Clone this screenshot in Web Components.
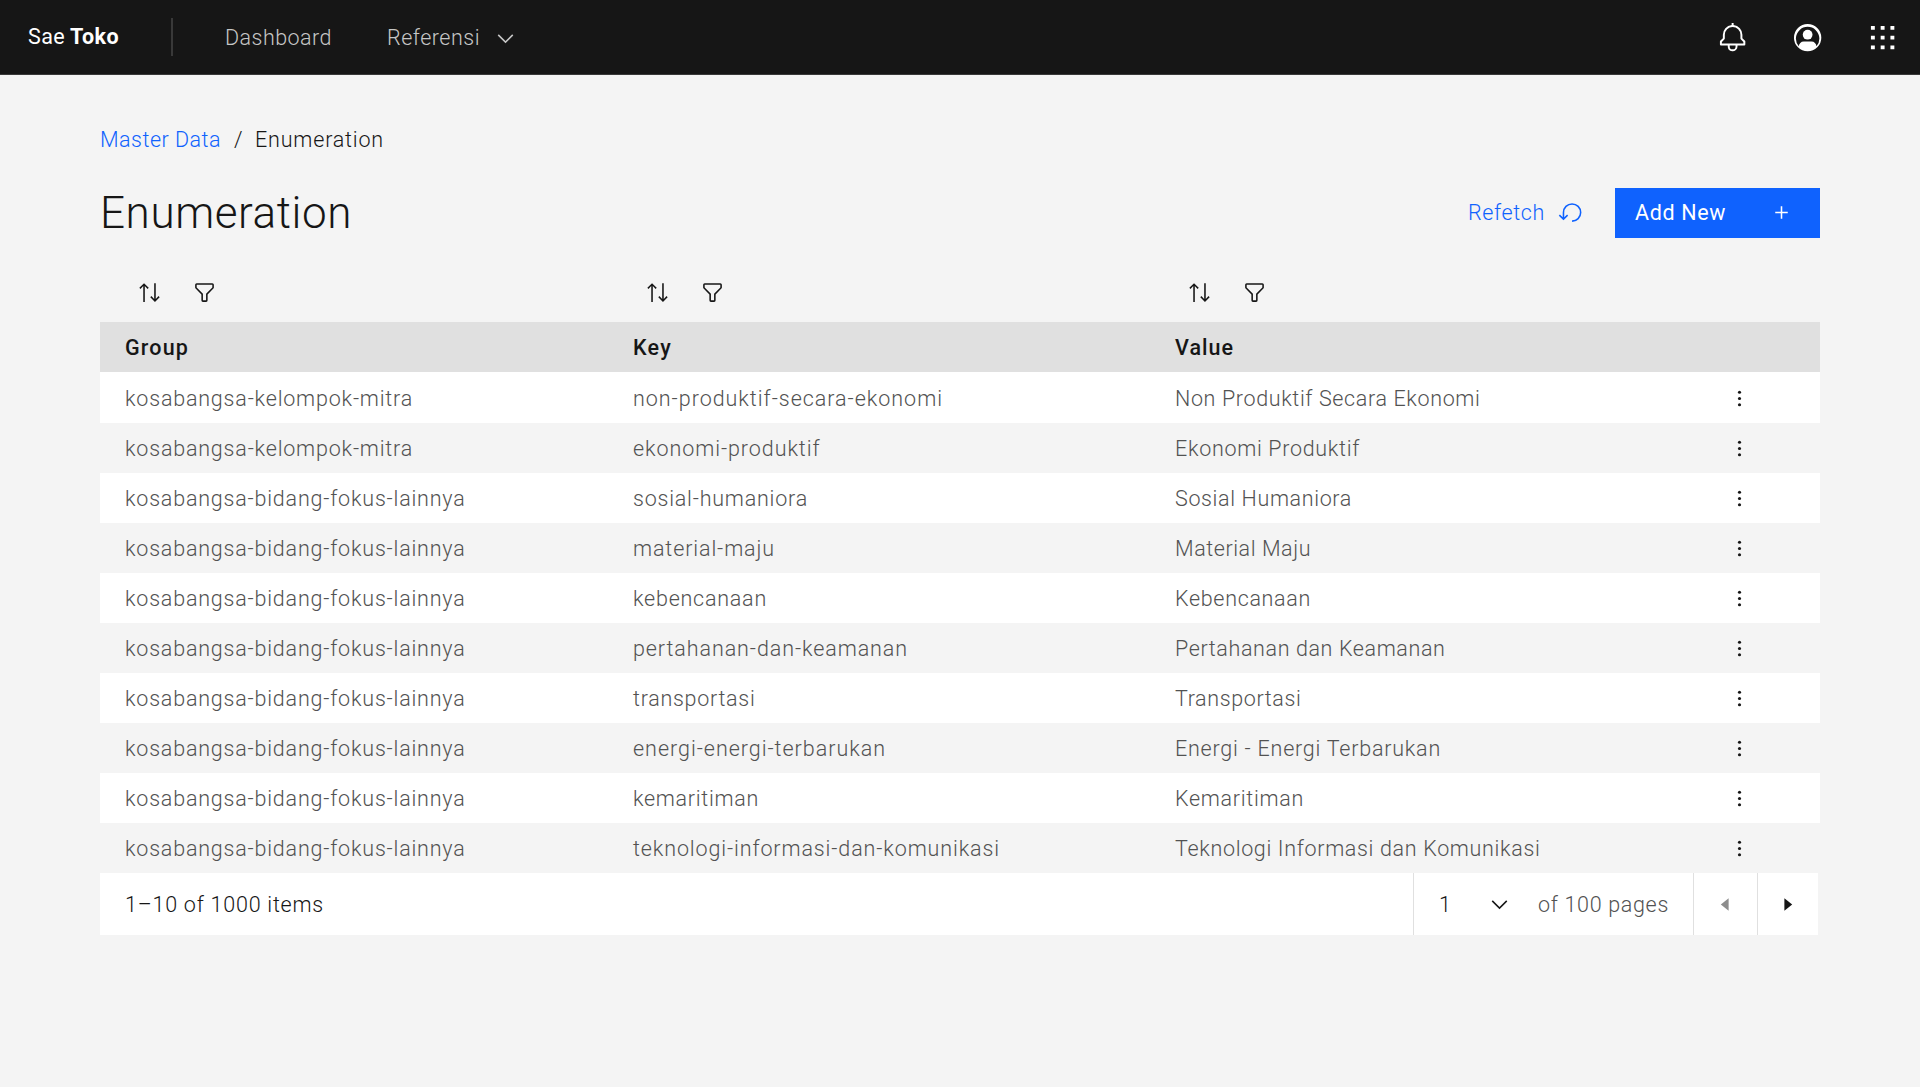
<!DOCTYPE html>
<html lang="id">
<head>
<meta charset="utf-8">
<title>Sae Toko</title>
<style>
html,body{margin:0;height:100%}
body{background:#f4f4f4;font-family:Roboto,"Open Sans",sans-serif;font-size:21.5px;font-weight:350;color:#161616;line-height:50px}
</style>
</head>
<body>
<sae-app></sae-app>
<script>
const ICONS={
bell:'<path d="M28.7071,19.293,26,16.5859V13a10.0136,10.0136,0,0,0-9-9.9492V1H15V3.0508A10.0136,10.0136,0,0,0,6,13v3.5859L3.2929,19.293A1,1,0,0,0,3,20v3a1,1,0,0,0,1,1h7v.7768a5.152,5.152,0,0,0,4.5,5.1987A5.0057,5.0057,0,0,0,21,25V24h7a1,1,0,0,0,1-1V20A1,1,0,0,0,28.7071,19.293ZM19,25a3,3,0,0,1-6,0V24h6Zm8-3H5V20.4141L7.707,17.707A1,1,0,0,0,8,17V13a8,8,0,0,1,16,0v4a1,1,0,0,0,.293.707L27,20.4141Z"/>',
user:'<path d="M16,8a5,5,0,1,0,5,5A5,5,0,0,0,16,8Z"/><path d="M16,2A14,14,0,1,0,30,16,14.0158,14.0158,0,0,0,16,2ZM24.993,24.9258A5.0016,5.0016,0,0,0,20,20H12a5.0016,5.0016,0,0,0-4.9929,4.9258,12,12,0,1,1,17.9858,0Z"/>',
grid:'<path d="M14 4h4v4h-4zM4 4h4v4H4zM24 4h4v4h-4zM14 14h4v4h-4zM4 14h4v4H4zM24 14h4v4h-4zM14 24h4v4h-4zM4 24h4v4H4zM24 24h4v4h-4z"/>',
sort:'<path d="M27.6 20.6L24 24.2 24 4 22 4 22 24.2 18.4 20.6 17 22 23 28 29 22zM9 4L3 10 4.4 11.4 8 7.8 8 28 10 28 10 7.8 13.6 11.4 15 10z"/>',
filter:'<path d="M18,28H14a2,2,0,0,1-2-2V18.41L4.59,11A2,2,0,0,1,4,9.59V6A2,2,0,0,1,6,4H26a2,2,0,0,1,2,2V9.59A2,2,0,0,1,27.41,11L20,18.41V26A2,2,0,0,1,18,28ZM6,6V9.59l8,8V26h4V17.59l8-8V6Z"/>',
reset:'<path d="M18,28A12,12,0,1,0,6,16v6.2L2.4,18.6,1,20l6,6,6-6-1.4-1.4L8,22.2V16H8A10,10,0,1,1,18,26Z"/>',
plus:'<path d="M17 15V8h-2v7H8v2h7v7h2v-7h7v-2z"/>',
chevron:'<path d="M16 22L6 12 7.4 10.6 16 19.2 24.6 10.6 26 12z"/>',
left:'<path d="M20 24L10 16 20 8z"/>',
right:'<path d="M12 8L22 16 12 24z"/>',
dots:'<circle cx="16" cy="8" r="2"/><circle cx="16" cy="16" r="2"/><circle cx="16" cy="24" r="2"/>'
};
class SaeIcon extends HTMLElement{
  connectedCallback(){
    const s=this.getAttribute('size')||25;
    this.attachShadow({mode:'open'}).innerHTML=`<style>:host{display:block;flex:none;width:${s}px;height:${s}px}svg{display:block;width:100%;height:100%;fill:currentColor}</style><svg viewBox="0 0 32 32">${ICONS[this.getAttribute('name')]}</svg>`;
  }
}
customElements.define('sae-icon',SaeIcon);

/* A label that tracks its letters so that the run fills the width in `w`. */
class SaeLabel extends HTMLElement{
  connectedCallback(){
    this.attachShadow({mode:'open'}).innerHTML='<style>:host{display:block;flex:none;white-space:nowrap}span{display:inline-block}</style><span><slot></slot></span>';
    const w=+this.getAttribute('w'),span=this.shadowRoot.querySelector('span');
    this.style.width=w+'px';
    const n=this.textContent.length;
    span.style.letterSpacing=((w-span.getBoundingClientRect().width)/n).toFixed(3)+'px';
  }
}
customElements.define('sae-label',SaeLabel);

class SaeHeader extends HTMLElement{
  connectedCallback(){
    this.attachShadow({mode:'open'}).innerHTML=`<style>
:host{display:flex;align-items:center;box-sizing:border-box;height:75px;background:#161616;border-bottom:1px solid #393939;color:#c6c6c6;font-weight:400;padding:1px 22px 0 28px}
.brand{display:flex;gap:5px;color:#fff;padding-bottom:1px}
.brand b{font-weight:700}
.rule{width:2px;height:38px;background:#393939;margin:0 52px 1px 52px}
nav{display:flex;align-items:center;gap:55px;font-weight:350;padding-top:1px}
.menu{display:flex;align-items:center;gap:13px}
.actions{display:flex;gap:43.5px;margin-left:auto;color:#fff}
</style>
<div class="brand"><sae-label w="37">Sae</sae-label><b><sae-label w="49">Toko</sae-label></b></div>
<div class="rule"></div>
<nav><sae-label w="107">Dashboard</sae-label><div class="menu"><sae-label w="93">Referensi</sae-label><sae-icon name="chevron"></sae-icon></div></nav>
<div class="actions"><sae-icon name="bell" size="31.25"></sae-icon><sae-icon name="user" size="31.25"></sae-icon><sae-icon name="grid" size="31.25"></sae-icon></div>`;
  }
}
customElements.define('sae-header',SaeHeader);

class SaePageHead extends HTMLElement{
  connectedCallback(){
    this.attachShadow({mode:'open'}).innerHTML=`<style>
:host{display:block}
.crumbs{display:flex;height:50px}
.crumbs a,.refetch{color:#0f62fe}
.bar{display:flex;align-items:center;justify-content:space-between;height:50px;margin-top:23px}
h1{margin:0;font-size:44px}
h1{font-weight:330}
.actions{display:flex;gap:32px}
.refetch{display:flex;align-items:center;gap:13px}
.refetch sae-icon,.add sae-icon{margin-bottom:1px}
.add{display:flex;align-items:center;justify-content:space-between;box-sizing:border-box;width:205px;height:50px;padding:0 26px 0 20px;background:#0f62fe;color:#fff;font-weight:400}
</style>
<div class="crumbs"><a><sae-label w="121">Master Data</sae-label></a><sae-label w="9" style="margin:0 12px 0 13px">/</sae-label><sae-label w="129">Enumeration</sae-label></div>
<div class="bar"><h1><sae-label w="252">Enumeration</sae-label></h1>
<div class="actions"><div class="refetch"><sae-label w="77">Refetch</sae-label><sae-icon name="reset"></sae-icon></div>
<div class="add"><sae-label w="91">Add New</sae-label><sae-icon name="plus"></sae-icon></div></div></div>`;
  }
}
customElements.define('sae-page-head',SaePageHead);

const B=['kosabangsa-bidang-fokus-lainnya',340.5],M=['kosabangsa-kelompok-mitra',288];
const ROWS=[
[M,['non-produktif-secara-ekonomi',310],['Non Produktif Secara Ekonomi',305.5]],
[M,['ekonomi-produktif',187.5],['Ekonomi Produktif',185]],
[B,['sosial-humaniora',175],['Sosial Humaniora',177]],
[B,['material-maju',142],['Material Maju',136]],
[B,['kebencanaan',134],['Kebencanaan',136]],
[B,['pertahanan-dan-keamanan',275],['Pertahanan dan Keamanan',270.5]],
[B,['transportasi',122.5],['Transportasi',126.5]],
[B,['energi-energi-terbarukan',253],['Energi - Energi Terbarukan',266]],
[B,['kemaritiman',126],['Kemaritiman',129]],
[B,['teknologi-informasi-dan-komunikasi',367],['Teknologi Informasi dan Komunikasi',365.5]]];

class SaeTable extends HTMLElement{
  connectedCallback(){
    const label=([t,w])=>`<div><sae-label w="${w}">${t}</sae-label></div>`;
    const tools='<div class="tools"><sae-icon name="sort"></sae-icon><sae-icon name="filter"></sae-icon></div>';
    this.attachShadow({mode:'open'}).innerHTML=`<style>
:host{display:block}
.row{display:grid;grid-template-columns:508px 542px 1fr auto;align-items:center;box-sizing:border-box;height:50px;padding:1px 68px 0 25px;color:#525252}
.row.odd{background:#fff}
.row.head{background:#e0e0e0;color:#161616;font-weight:550}
.row.top{padding-top:0;padding-bottom:9px}
.row.first{height:51px;padding-top:2px}
.row sae-icon{color:#161616}
.row.body sae-icon{margin-bottom:2px}
.tools{display:flex;gap:29.5px;padding-left:12px}
</style>
<div class="row top">${tools}${tools}${tools}</div>
<div class="row head">${label(['Group',64])}${label(['Key',39])}${label(['Value',59])}</div>
${ROWS.map((r,i)=>`<div class="row body${i?'':' first'}${i%2?'':' odd'}">${r.map(label).join('')}<sae-icon name="dots"></sae-icon></div>`).join('')}`;
  }
}
customElements.define('sae-table',SaeTable);

class SaePagination extends HTMLElement{
  connectedCallback(){
    this.attachShadow({mode:'open'}).innerHTML=`<style>
:host{display:flex;align-items:center;height:62px;line-height:62px;background:#fff;margin-right:2px;padding-left:25px}
sae-label{padding-top:1px}
.cell{display:flex;align-items:center;box-sizing:border-box;height:62px;border-left:1px solid #e0e0e0}
.page{margin-left:auto;width:280px;padding-left:25px}
.page sae-icon{margin:0 26px 0 33px}
.of{color:#525252}
.nav{width:63.5px;justify-content:center}
.nav.end{width:61.5px}
.off{color:#8d8d8d}
</style>
<sae-label w="199">1–10 of 1000 items</sae-label>
<div class="cell page"><sae-label w="15">1</sae-label><sae-icon name="chevron"></sae-icon><sae-label class="of" w="131">of 100 pages</sae-label></div>
<div class="cell nav off"><sae-icon name="left"></sae-icon></div>
<div class="cell nav end"><sae-icon name="right"></sae-icon></div>`;
  }
}
customElements.define('sae-pagination',SaePagination);

class SaeApp extends HTMLElement{
  connectedCallback(){
    this.attachShadow({mode:'open'}).innerHTML=`<style>
:host{display:block}
main{display:flex;flex-direction:column;padding:40px 100px 0}
sae-table{margin-top:34px}
</style><sae-header></sae-header><main><sae-page-head></sae-page-head><sae-table></sae-table><sae-pagination></sae-pagination></main>`;
  }
}
customElements.define('sae-app',SaeApp);
</script>
</body>
</html>
